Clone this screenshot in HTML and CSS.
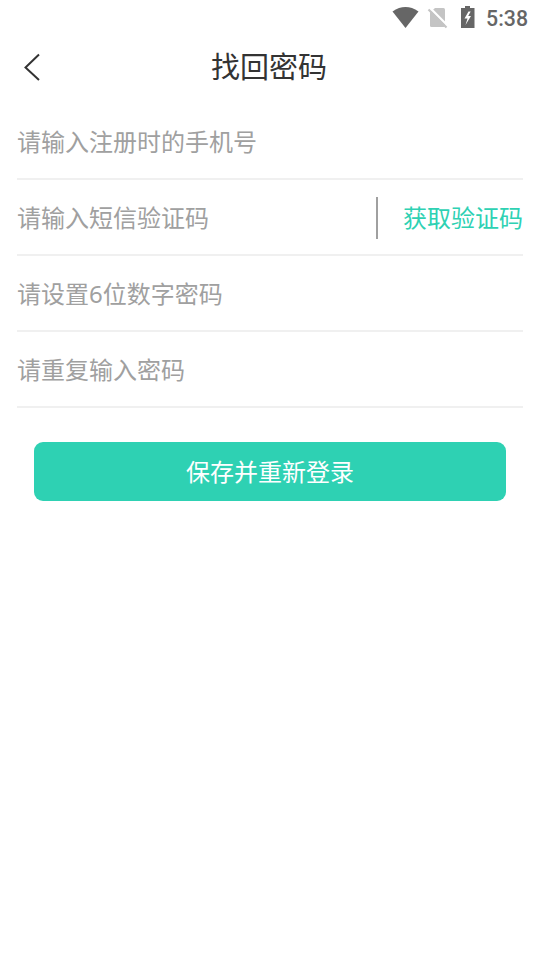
FILE: index.html
```html
<!DOCTYPE html>
<html lang="zh-CN">
<head>
<meta charset="utf-8">
<title>找回密码</title>
<link rel="stylesheet" href="styles.css">
</head>
<body>
<div class="status">
  <svg class="wifi" width="28" height="24" viewBox="0 0 28 24"><path d="M.5 5.500Q13.500-3.300 26.500 5.500L13.500 22z"/></svg>
  <svg class="sim" width="22" height="22" viewBox="0 0 22 22"><path d="M8 1h8.500q1.500 0 1.500 1.500v16q0 1.500-1.500 1.500h-12Q3 20 3 18.500V5.500z"/><path class="gap" d="M2.500 .5l18.500 18.500"/><path class="slash" d="M1.500 2.500l18 18"/></svg>
  <svg class="battery" width="16" height="24" viewBox="0 0 16 24"><path fill-rule="evenodd" d="M5 0h5v2h4.500v20H1V2h4zM8.500 5.500L4.500 12.500h3l-2 6.500 5.500-9H8.200l2.500-4.500z"/></svg>
  <span class="time">5:38</span>
</div>
<header class="header">
  <svg class="back" width="18" height="30" viewBox="0 0 18 30"><path d="M16 2.500L2.500 15.500l13.500 12.500"/></svg>
  <h1 class="title">找回密码</h1>
</header>
<main class="form">
  <div class="row"><span class="hint">请输入注册时的手机号</span></div>
  <div class="row"><span class="hint">请输入短信验证码</span><span class="code">获取验证码</span></div>
  <div class="row"><span class="hint">请设置6位数字密码</span></div>
  <div class="row"><span class="hint">请重复输入密码</span></div>
  <button class="submit">保存并重新登录</button>
</main>
</body>
</html>
```
FILE: styles.css
```css
* { box-sizing: border-box; }
body {
  margin: 0;
  height: 960px;
  background: #fff;
  font-family: "Noto Sans", "Noto Sans CJK SC", sans-serif;
}
.status {
  height: 36px;
  display: flex;
  align-items: center;
  justify-content: flex-end;
  padding-right: 12px;
  fill: #666;
}
.wifi { margin-right: 7px; }
.sim { margin-right: 10.500px; fill: #c4c4c4; }
.gap { stroke: #fff; stroke-width: 2.400; }
.slash { stroke: #c4c4c4; stroke-width: 2.200; }
.battery { margin-right: 10.500px; }
.time {
  font: 500 21.300px/36px Roboto, sans-serif;
  padding-top: 1px;
  color: #666;
}
.header {
  height: 68px;
  display: grid;
  grid-template-columns: 60px 1fr 62px;
  align-items: center;
}
.back {
  margin: 0 0 6px 23px;
  fill: none;
  stroke: #333;
  stroke-width: 2;
}
.title {
  margin: 0 0 6px;
  text-align: center;
  font-size: 29px;
  line-height: 40px;
  font-weight: 400;
  color: #333;
}
.form { padding: 0 17px; }
.row {
  height: 76px;
  padding-top: 2px;
  display: flex;
  align-items: center;
  justify-content: space-between;
  border-bottom: 2px solid #f0f0f0;
  font-size: 24px;
  line-height: 36px;
}
.hint { color: #a0a0a0; }
.code {
  height: 42px;
  line-height: 42px;
  padding-left: 25px;
  border-left: 2px solid #a0a0a0;
  color: #2ed1b3;
}
.submit {
  display: block;
  width: calc(100% - 34px);
  height: 59px;
  margin: 34px 17px 0;
  padding: 1px 0 0;
  border: 0;
  border-radius: 9px;
  background: #2ed1b3;
  color: #fff;
  font: inherit;
  font-size: 24px;
  line-height: 36px;
}
```
